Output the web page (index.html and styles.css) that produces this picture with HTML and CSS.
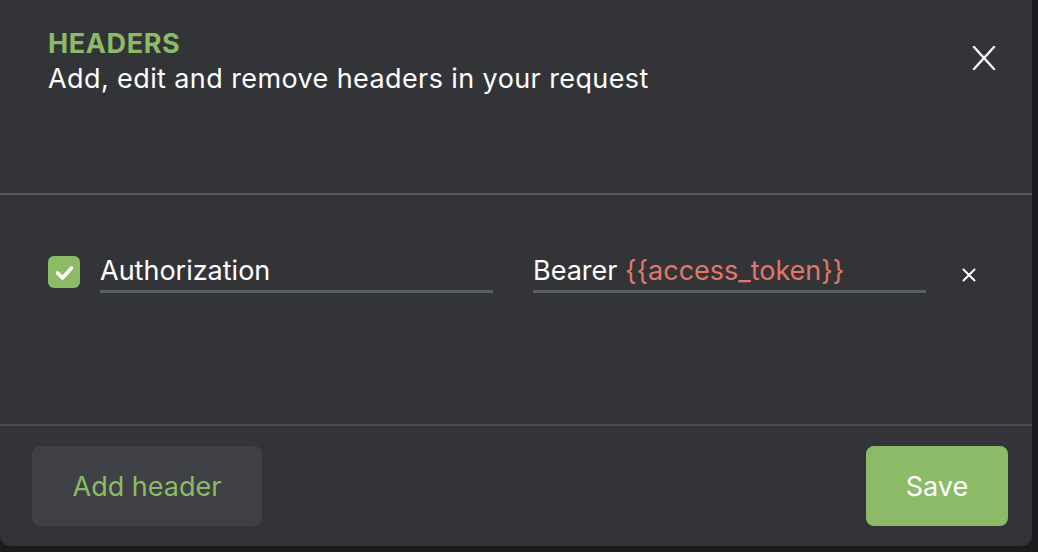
FILE: index.html
```html
<!DOCTYPE html>
<html>
<head>
<meta charset="utf-8">
<link rel="stylesheet" href="styles.css">
</head>
<body>
<div class="modal">
  <div class="modal-header">
    <div class="titles">
      <div class="title">HEADERS</div>
      <div class="subtitle">Add, edit and remove headers in your request</div>
    </div>
    <button class="close" aria-label="Close">
      <svg width="24" height="24" viewBox="0 0 24 24"><path d="M2 1 L22 23 M22 1 L2 23" stroke="#fff" stroke-width="2.4" stroke-linecap="round" fill="none"/></svg>
    </button>
  </div>
  <div class="modal-body">
    <div class="header-row">
      <span class="checkbox">
        <svg width="32" height="32" viewBox="0 0 32 32"><path d="M9.5 17 L14.5 22 L23.5 12" stroke="#fff" stroke-width="3.6" stroke-linecap="round" stroke-linejoin="round" fill="none"/></svg>
      </span>
      <div class="field"><span class="plain">Authorization</span></div>
      <div class="field value"><span class="plain">Bearer </span><span class="var">{{access_token}}</span></div>
      <button class="remove" aria-label="Remove">
        <svg width="14" height="14" viewBox="0 0 14 14"><path d="M1.5 1.5 L12.5 12.5 M12.5 1.5 L1.5 12.5" stroke="#fff" stroke-width="2" stroke-linecap="round" fill="none"/></svg>
      </button>
    </div>
  </div>
  <div class="modal-footer">
    <button class="btn btn-secondary">Add header</button>
    <button class="btn btn-primary">Save</button>
  </div>
</div>
</body>
</html>
```

FILE: styles.css
```css
html, body {
  margin: 0;
  padding: 0;
  background: #1c1c1e;
  font-family: Inter, "Noto Sans", sans-serif;
}
.modal {
  width: 1032px;
  height: 546px;
  background: #333438;
  border-radius: 0 0 10px 10px;
  display: flex;
  flex-direction: column;
  box-sizing: border-box;
}
.modal-header {
  height: 195px;
  flex: none;
  box-sizing: border-box;
  padding: 29px 36px 0 48px;
  display: flex;
  justify-content: space-between;
  align-items: flex-start;
  border-bottom: 2px solid #55585d;
}
.title {
  color: #8bbb65;
  font-weight: 700;
  font-size: 27px;
  line-height: 30px;
  letter-spacing: 0.6px;
}
.subtitle {
  color: #ffffff;
  font-size: 27px;
  line-height: 34px;
  margin-top: 3px;
  letter-spacing: 0.4px;
}
.close {
  background: none;
  border: 0;
  padding: 0;
  margin-top: 17px;
  cursor: pointer;
  display: flex;
}
.modal-body {
  flex: 1;
  padding: 61px 56px 0 48px;
  border-bottom: 2px solid #4a4c51;
}
.header-row {
  display: flex;
  align-items: flex-start;
}
.checkbox {
  width: 32px;
  height: 32px;
  border-radius: 6px;
  background: #8bbb65;
  display: flex;
  flex: none;
  margin-right: 20px;
}
.field {
  width: 394px;
  height: 37px;
  box-sizing: border-box;
  padding-top: 1px;
  border-bottom: 3px solid #5b5e63;
  font-size: 27px;
  line-height: 28px;
  white-space: nowrap;
}
.field.value {
  margin-left: 40px;
}
.plain { color: #ffffff; }
.var { color: #e0786a; }
.remove {
  background: none;
  border: 0;
  padding: 0;
  margin-left: 36px;
  margin-top: 12px;
  display: flex;
  cursor: pointer;
}
.modal-footer {
  height: 120px;
  flex: none;
  box-sizing: border-box;
  padding: 20px 24px 20px 32px;
  display: flex;
  justify-content: space-between;
  align-items: stretch;
}
.btn {
  border: 0;
  border-radius: 8px;
  font-family: Inter, "Noto Sans", sans-serif;
  font-size: 27px;
  cursor: pointer;
}
.btn-secondary {
  width: 230px;
  background: #3f4146;
  color: #8bbb65;
}
.btn-primary {
  width: 142px;
  background: #8cbb68;
  color: #ffffff;
}
```
